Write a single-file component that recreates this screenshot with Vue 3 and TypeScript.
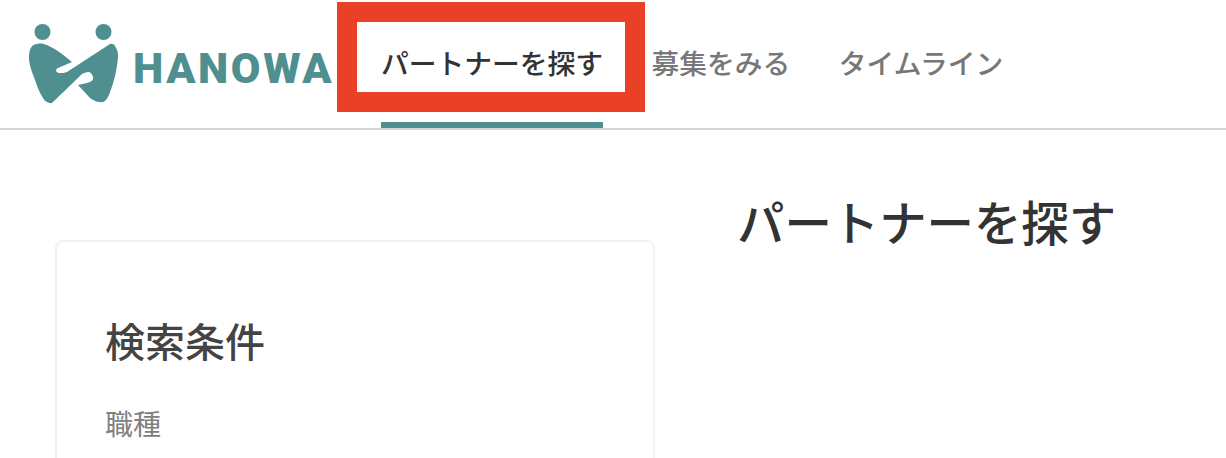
<template>
  <div class="page">
    <header class="header">
      <a class="logo" href="#" aria-label="HANOWA">
        <svg class="logo-mark" width="90" height="80" viewBox="0 0 90 80" xmlns="http://www.w3.org/2000/svg">
          <circle cx="13.5" cy="8" r="8" fill="#4f8f90" />
          <circle cx="74.5" cy="8" r="8" fill="#4f8f90" />
          <path
            fill="#4f8f90"
            d="M0 33C0 25 3 20 8 20C12 19 15 20 18 21C27 25 36 32 43 38L29 44C26 45 27 49 30 49C33 49 36 49 38 48L81 20C84 19 86 21 87 24C89 27 89 30 89 33C88 47 84 62 79 73C77 77 74 79 71 78C67 78 64 76 61 74L49 61L58 59C62 58 65 56 64 53C63 49 61 48 59 48C57 48 55 49 53 50L24 78C22 80 20 79 18 78C16 77 15 76 14 74C10 68 8 62 6 56C3 48 0 41 0 33Z"
          />
        </svg>
        <span class="logo-text">HANOWA</span>
      </a>
      <nav class="nav">
        <a v-for="item in navItems" :key="item.label" class="nav-item" :class="{ active: item.active }" href="#">
          {{ item.label }}
        </a>
      </nav>
      <div class="highlight" aria-hidden="true"></div>
    </header>

    <main class="main">
      <aside class="search-col">
        <section class="card">
          <h2 class="card-title">検索条件</h2>
          <p class="field-label">職種</p>
        </section>
      </aside>
      <div class="result-col">
        <h1 class="page-title">パートナーを探す</h1>
      </div>
    </main>
  </div>
</template>

<script setup lang="ts">
type NavItem = { label: string; active?: boolean }

const navItems: NavItem[] = [
  { label: 'パートナーを探す', active: true },
  { label: '募集をみる' },
  { label: 'タイムライン' }
]
</script>

<style>
html,
body {
  margin: 0;
  background: #fff;
  overflow: hidden;
}
</style>

<style scoped>
.page {
  height: 458px;
  overflow: hidden;
  font-family: "Noto Sans CJK JP", "Noto Sans", sans-serif;
  color: #333;
}

.header {
  position: relative;
  display: flex;
  align-items: stretch;
  height: 128px;
  padding-left: 29px;
  border-bottom: 2px solid #d4d4d4;
}

.logo {
  display: flex;
  align-items: center;
  width: 352px;
  text-decoration: none;
}

.logo-mark {
  flex: none;
}

.logo-text {
  margin-left: 14px;
  margin-top: 8px;
  font-family: "Roboto", sans-serif;
  font-size: 43px;
  font-weight: 900;
  line-height: 1;
  letter-spacing: 2.6px;
  white-space: nowrap;
  color: #4f8f90;
}

.nav {
  display: flex;
  gap: 48.5px;
}

.nav-item {
  display: flex;
  align-items: center;
  box-sizing: border-box;
  height: 128px;
  padding-bottom: 4px;
  font-size: 27.75px;
  font-weight: 500;
  color: #777;
  text-decoration: none;
}

.nav-item.active {
  color: #333;
  box-shadow: inset 0 -6px 0 #4f8f90;
}

.highlight {
  position: absolute;
  left: 337px;
  top: 2px;
  width: 268px;
  height: 70px;
  border: 20px solid #ea4025;
}

.main {
  display: flex;
  padding-left: 55px;
}

.search-col {
  flex: none;
  width: 600px;
  padding-top: 110px;
}

.card {
  height: 400px;
  box-sizing: border-box;
  padding: 70px 48px 0;
  border: 2px solid #f2f2f2;
  border-radius: 8px;
}

.card-title {
  margin: 0;
  font-size: 40px;
  font-weight: 500;
  line-height: 56px;
  color: #444;
}

.field-label {
  margin: 35px 0 0;
  font-size: 28px;
  line-height: 40px;
  color: #808080;
}

.result-col {
  margin-left: 82px;
  padding-top: 59px;
}

.page-title {
  margin: 0;
  font-size: 47.4px;
  font-weight: 500;
  line-height: 64px;
  color: #333;
}
</style>
